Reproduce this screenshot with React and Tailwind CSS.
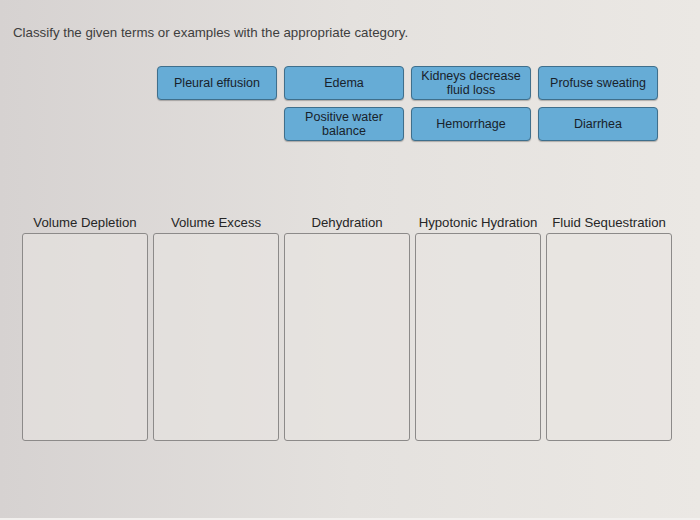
import React from 'react';

const terms = [
  [null, 'Pleural effusion', 'Edema', 'Kidneys decrease fluid loss', 'Profuse sweating'],
  [null, null, 'Positive water balance', 'Hemorrhage', 'Diarrhea'],
];

const categories = [
  'Volume Depletion',
  'Volume Excess',
  'Dehydration',
  'Hypotonic Hydration',
  'Fluid Sequestration',
];

// draggable term chip
function Term({ label }) {
  return (
    <div className="flex h-[34px] items-center justify-center rounded-[4px] border border-[#3f6f8c] bg-[#66acd6] px-2 text-center text-[12.5px] leading-[14px] text-[#18222b] shadow-[0_1px_1px_rgba(0,0,0,0.25)]">
      {label}
    </div>
  );
}

export default function App() {
  return (
    <div
      className="flex h-[520px] w-[700px] flex-col overflow-hidden bg-gradient-to-r from-[#d6d2d1] via-[#e4e1de] to-[#ebe8e4] text-[#2a2a2a]"
      style={{ fontFamily: '"Liberation Sans", Arial, sans-serif' }}
    >
      <p className="pl-[13px] pt-[25px] text-[13.3px] leading-[16px] text-[#3e3e3e]">
        Classify the given terms or examples with the appropriate category.
      </p>

      {/* term bank */}
      <div className="ml-[157px] mt-[25px] flex flex-col gap-[7px]">
        {terms.map((row, i) => (
          <div key={i} className="grid grid-cols-[120px_120px_120px_120px] gap-x-[7px]">
            {row.slice(1).map((t, j) =>
              t ? <Term key={j} label={t} /> : <div key={j} />
            )}
          </div>
        ))}
      </div>

      {/* drop zones */}
      <div className="ml-[22px] mt-[74px] flex gap-[5px]">
        {categories.map((c) => (
          <div key={c} className="flex w-[126px] flex-col items-center">
            <span className="whitespace-nowrap text-[13.2px] leading-[16px] text-[#262626]">{c}</span>
            <div className="mt-[2px] h-[208px] w-full rounded-[3px] border border-[#8c8a89] bg-[#e7e4e1]/60" />
          </div>
        ))}
      </div>

      <div className="mt-auto h-[2px] bg-[#f2f0ee]" />
    </div>
  );
}
